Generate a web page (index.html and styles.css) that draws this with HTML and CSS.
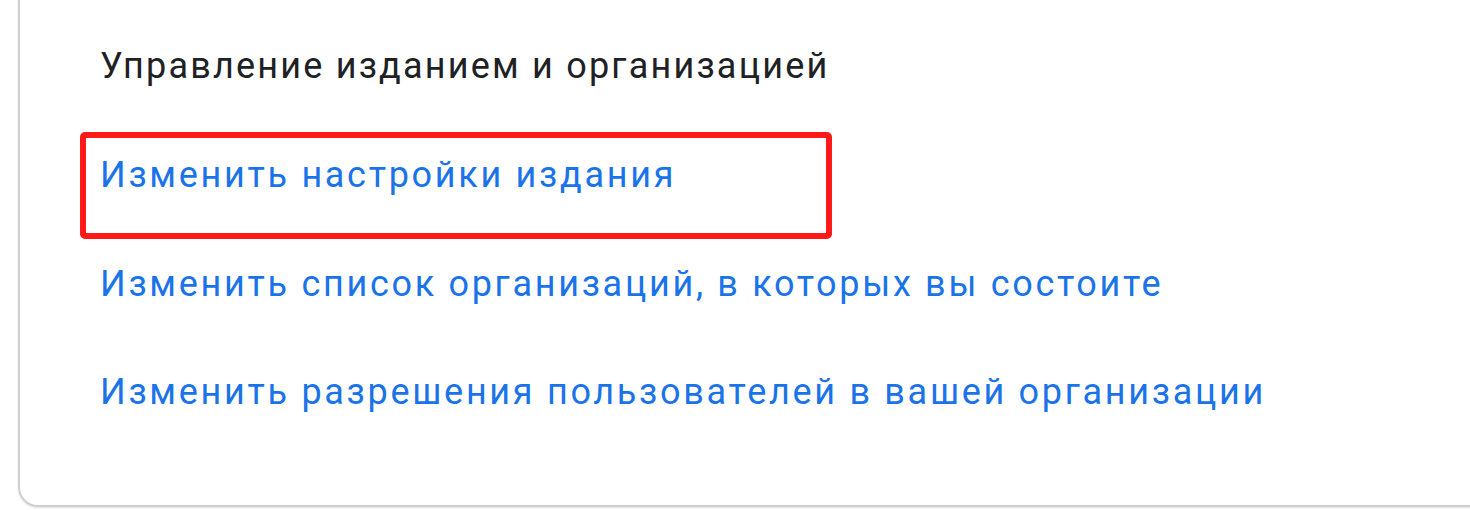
FILE: index.html
```html
<!DOCTYPE html>
<html lang="ru">
<head>
<meta charset="utf-8">
<link rel="stylesheet" href="styles.css">
</head>
<body>
<div class="card">
  <div class="title">Управление изданием и организацией</div>
  <div class="item highlight"><a class="link" href="#">Изменить настройки издания</a></div>
  <div class="item second"><a class="link" href="#">Изменить список организаций, в которых вы состоите</a></div>
  <div class="item third"><a class="link" href="#">Изменить разрешения пользователей в вашей организации</a></div>
</div>
</body>
</html>
```
FILE: styles.css
```css
html, body {
  margin: 0;
  padding: 0;
  background: #ffffff;
  overflow: hidden;
  width: 1470px;
  height: 510px;
}
.card {
  box-sizing: border-box;
  margin-left: 18px;
  margin-top: -40px;
  width: 1600px;
  height: 547px;
  border: 2px solid #cfcfcf;
  border-radius: 20px;
  box-shadow: 0 1px 2px rgba(0,0,0,0.12);
  padding-top: 82px;
  padding-left: 80px;
  font-family: Roboto, "Noto Sans", sans-serif;
  font-size: 36px;
  line-height: 44px;
}
.title {
  color: #202124;
  letter-spacing: 2.2px;
}
.item {
  white-space: nowrap;
  letter-spacing: 2.7px;
}
.link {
  color: #1a73e8;
  text-decoration: none;
}
.highlight {
  box-sizing: border-box;
  width: 752px;
  margin-left: -20px;
  margin-top: 44px;
  border: 6px solid #ff1a1a;
  border-radius: 5px;
  padding: 15px 0 36px 14px;
}
.second {
  margin-top: 23px;
}
.third {
  margin-top: 64px;
}
```
